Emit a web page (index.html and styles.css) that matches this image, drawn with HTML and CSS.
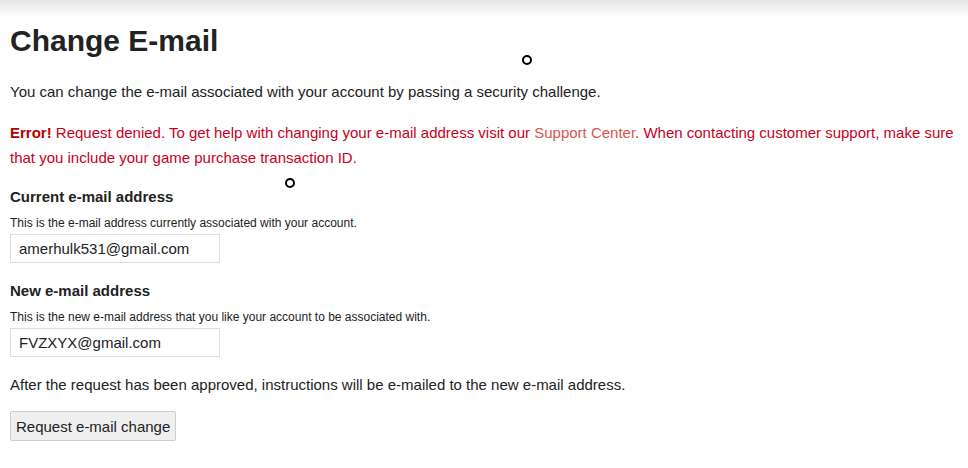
FILE: index.html
```html
<!DOCTYPE html>
<html>
<head>
<meta charset="utf-8">
<link rel="stylesheet" href="styles.css">
</head>
<body>
<div class="topbar"></div>
<main class="page">
  <h1 class="title">Change E-mail</h1>
  <p class="intro">You can change the e-mail associated with your account by passing a security challenge.</p>
  <p class="error"><strong>Error!</strong> Request denied. To get help with changing your e-mail address visit our <a class="link" href="#">Support Center</a>. When contacting customer support, make sure that you include your game purchase transaction ID.</p>
  <section class="field">
    <h3 class="label">Current e-mail address</h3>
    <p class="hint">This is the e-mail address currently associated with your account.</p>
    <div class="input">amerhulk531@gmail.com</div>
  </section>
  <section class="field">
    <h3 class="label">New e-mail address</h3>
    <p class="hint">This is the new e-mail address that you like your account to be associated with.</p>
    <div class="input">FVZXYX@gmail.com</div>
  </section>
  <p class="after">After the request has been approved, instructions will be e-mailed to the new e-mail address.</p>
  <button class="btn">Request e-mail change</button>
</main>
<span class="ring ring1"></span>
<span class="ring ring2"></span>
</body>
</html>
```
FILE: styles.css
```css
html, body { margin: 0; padding: 0; background: #fff; }
body { font-family: "Liberation Sans", Arial, sans-serif; color: #222; font-size: 15px; position: relative; width: 968px; height: 468px; overflow: hidden; }
.topbar { height: 18px; background: linear-gradient(#e6e6e6, #ffffff); }
.page { padding: 0 10px; }
.title { font-size: 30px; font-weight: bold; margin: 5px 0 0; line-height: 36px; color: #222; }
.intro { margin: 23px 0 0; line-height: 20px; }
.error { color: #c8001e; margin: 18px 0 0; line-height: 25px; }
.error strong { color: #b30000; }
.link { color: #d9534f; text-decoration: none; }
.field { margin-top: 17px; }
.label { font-size: 15px; font-weight: bold; margin: 0; line-height: 20px; }
.hint { font-size: 12px; margin: 8px 0 0; line-height: 16px; }
.input { width: 200px; height: 27px; border: 1px solid #ddd; padding: 0 0 0 8px; margin-top: 3px; line-height: 27px; color: #222; }
.field + .field { margin-top: 18px; }
.after { margin: 18px 0 0; line-height: 20px; }
.btn { margin-top: 16px; font-family: "Liberation Sans", Arial, sans-serif; font-size: 15px; color: #222; background: #efefef; border: 1px solid #ccc; height: 30px; padding: 0 5px; border-radius: 2px; }
.ring { position: absolute; width: 6px; height: 6px; border: 2px solid #000; border-radius: 50%; }
.ring1 { left: 522px; top: 55px; }
.ring2 { left: 285px; top: 178px; }
```
